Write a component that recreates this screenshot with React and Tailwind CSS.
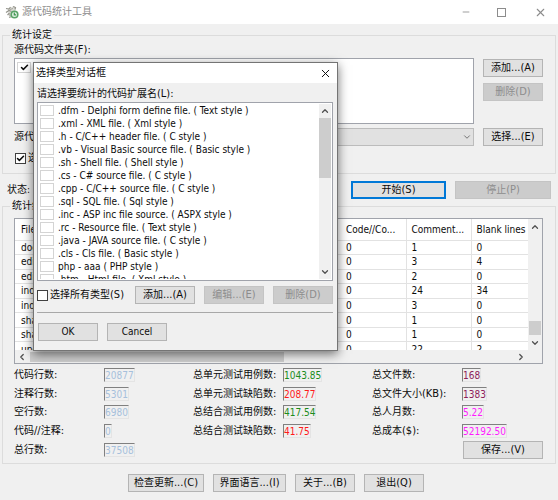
import { Check, ChevronDown, ChevronLeft, ChevronRight, ChevronUp, Minus, X } from 'lucide-react';
import clsx from 'clsx';

const fileTypes = [
  '.dfm - Delphi form define file. ( Text style )',
  '.xml - XML file. ( Xml style )',
  '.h - C/C++ header file. ( C style )',
  '.vb - Visual Basic source file. ( Basic style )',
  '.sh - Shell file. ( Shell style )',
  '.cs - C# source file. ( C style )',
  '.cpp - C/C++ source file. ( C style )',
  '.sql - SQL file. ( Sql style )',
  '.inc - ASP inc file source. ( ASPX style )',
  '.rc - Resource file. ( Text style )',
  '.java - JAVA source file. ( C style )',
  '.cls - Cls file. ( Basic style )',
  'php - aaa ( PHP style )',
  '.htm - Html file. ( Xml style )',
];

const rows = [
  ['doc', '0', '1', '0'],
  ['edit', '0', '3', '4'],
  ['edit', '0', '2', '0'],
  ['ind', '0', '24', '34'],
  ['ind', '0', '3', '0'],
  ['sha', '0', '1', '0'],
  ['sha', '0', '1', '0'],
  ['upd', '0', '22', '2'],
];

const stats = [
  [
    ['代码行数:', '20877', 'text-[#a6c0dc]'],
    ['注释行数:', '5301', 'text-[#a6c0dc]'],
    ['空行数:', '6980', 'text-[#a6c0dc]'],
    ['代码//注释:', '0', 'text-[#a6c0dc]'],
    ['总行数:', '37508', 'text-[#a6c0dc]'],
  ],
  [
    ['总单元测试用例数:', '1043.85', 'text-[#1c8c1c]'],
    ['总单元测试缺陷数:', '208.77', 'text-[#ff1a1a]'],
    ['总结合测试用例数:', '417.54', 'text-[#1c8c1c]'],
    ['总结合测试缺陷数:', '41.75', 'text-[#ff1a1a]'],
  ],
  [
    ['总文件数:', '168', 'text-[#8e1c5a]'],
    ['总文件大小(KB):', '1383', 'text-[#8e1c5a]'],
    ['总人月数:', '5.22', 'text-[#ff1aff]'],
    ['总成本($):', '52192.50', 'text-[#ff1aff]'],
  ],
];

// Latin runs are set one step larger than the Chinese text next to them
function Text({ children }) {
  return children.split(/([\x20-\x7e]+)/).map((part, i) => (
    i % 2 ? <span key={i} className="text-[11px]">{part}</span> : part
  ));
}

function Button({ children, disabled, primary, className = 'w-[60px]' }) {
  return (
    <button
      type="button"
      disabled={disabled}
      className={clsx(
        'flex h-[18px] shrink-0 items-center justify-center whitespace-nowrap',
        disabled && 'border border-[#c4c4c4] bg-[#cccccc] text-[#8c8c8c]',
        primary && 'border-2 border-[#0078d7] bg-[#e1e1e1]',
        !disabled && !primary && 'border border-[#b4b4b4] bg-[#e1e1e1]',
        className,
      )}
    >
      <span>{children}</span>
    </button>
  );
}

function CheckBox({ id, label, checked, className }) {
  return (
    <span className="relative inline-flex shrink-0 align-top">
      <input id={id} type="checkbox" aria-label={label} defaultChecked={checked} className={clsx('peer appearance-none border bg-white', className)} />
      <Check size={9} strokeWidth={4} className="pointer-events-none absolute inset-0 m-auto hidden peer-checked:block" />
    </span>
  );
}

function Group({ title, children }) {
  return (
    <fieldset className="mx-0.5 min-w-0 border border-[#dcdcdc] pr-3 pb-1 pl-[11px]">
      <legend className="-ml-1 h-3.5 px-0.5 leading-[14px]">{title}</legend>
      {children}
    </fieldset>
  );
}

function AppIcon() {
  return (
    <svg viewBox="0 0 14 14" className="size-3.5">
      <path d="M3 3.5L9.5 1l2 9.5L4 13z" fill="#dcdcd6" />
      <path d="M1 3.5l3 .5 1.5-2M8 1.5l2.5 1-.5 2M1 7.5l3-2 2.5 1M2.5 10l2-2" fill="none" stroke="#94948c" strokeWidth="1.2" />
      <path d="M4 12.5l3-1M5 4.5l3-1M3.500 9l2 2" stroke="#a3a39b" />
      <circle cx="9.5" cy="9.5" r="3.3" fill="#dff0e2" stroke="#5aa468" strokeWidth="1.6" />
      <path d="M9.3 7.5v2.3h1.800" fill="none" stroke="#3f9150" strokeWidth="1.2" />
    </svg>
  );
}

function TypeDialog() {
  return (
    <div role="dialog" aria-label="选择类型对话框" className="absolute top-[62px] left-[33px] w-[305px] border border-[#747474] bg-[#f0f0f0] shadow-[0_3px_10px_rgba(0,0,0,0.55)]">
      <div className="flex h-5 items-center justify-between bg-white pr-[5px] pl-0.5">
        <h2>选择类型对话框</h2>
        <button type="button" aria-label="关闭"><X size={13} strokeWidth={1.8} /></button>
      </div>
      <div className="pt-0.5 pr-1 pl-[3px]">
        <p className="h-[17px] leading-[17px]"><Text>请选择要统计的代码扩展名(L):</Text></p>
        <div className="flex h-[179px] overflow-hidden border border-[#a0a3ab] bg-white p-px">
          <ul className="min-w-0 flex-1 overflow-hidden pl-px">
            {fileTypes.map((type, i) => (
              <li key={type} className="flex h-[13px] items-center gap-1 whitespace-nowrap">
                <CheckBox id={`type-${i}`} className="h-[11px] w-3.5 border-[#d4d4d4]" />
                <label htmlFor={`type-${i}`} className="leading-[13px]">{type}</label>
              </li>
            ))}
          </ul>
          <div className="flex w-3 flex-col items-center bg-[#f0f0f0] text-[#505050]">
            <ChevronUp size={10} strokeWidth={3} className="my-[2px]" />
            <div className="h-[60px] w-full bg-[#cdcdcd]" />
            <ChevronDown size={10} strokeWidth={3} className="mt-auto mb-[2px]" />
          </div>
        </div>
        <div className="mt-[5px] flex items-center justify-between">
          <div className="flex w-[89px] items-center gap-0.5">
            <CheckBox id="all-types" className="size-[11px] border-[#404040]" />
            <label htmlFor="all-types" className="whitespace-nowrap"><Text>选择所有类型(S)</Text></label>
          </div>
          <Button><Text>添加...(A)</Text></Button>
          <Button disabled><Text>编辑...(E)</Text></Button>
          <Button disabled><Text>删除(D)</Text></Button>
        </div>
        <hr className="mt-2 border-[#a8a8a8]" />
        <div className="mt-2.5 mb-[9px] ml-px flex gap-[9px]">
          <Button>OK</Button>
          <Button>Cancel</Button>
        </div>
      </div>
    </div>
  );
}

function ResultTable() {
  return (
    <div className="mt-[5px] border border-[#a0a3ab] bg-[#f0f0f0]">
      <div className="flex h-[131px] overflow-hidden">
        <div className="min-w-0 flex-1 overflow-hidden bg-white">
          <table className="h-[138px] w-full table-fixed border-collapse text-left leading-[13px]">
            <thead>
              <tr className="h-[21px] border-b border-[#e2e2e2]">
                <th className="pl-1.5 font-normal">File</th>
                <th className="w-[65px] border-r border-[#e2e2e2] pl-[5px] font-normal whitespace-nowrap">Code//Co...</th>
                <th className="w-[65px] border-r border-[#e2e2e2] pl-[5px] font-normal whitespace-nowrap">Comment...</th>
                <th className="w-[57px] pl-[5px] font-normal whitespace-nowrap">Blank lines</th>
              </tr>
            </thead>
            <tbody>
              {rows.map(([file, code, comment, blank], i) => (
                <tr key={i} className="border-b border-[#e2e2e2]">
                  <td className="pl-1.5">{file}</td>
                  <td className="border-r border-[#e2e2e2] pl-[5px]">{code}</td>
                  <td className="border-r border-[#e2e2e2] pl-[5px]">{comment}</td>
                  <td className="pl-[5px]">{blank}</td>
                </tr>
              ))}
            </tbody>
          </table>
        </div>
        <div className="flex w-3.5 flex-col items-center text-[#505050]">
          <ChevronUp size={10} strokeWidth={3} className="mt-[3px]" />
          <div className="mt-auto mb-px h-3.5 w-3 bg-[#cdcdcd]" />
          <ChevronDown size={10} strokeWidth={3} className="my-[2px]" />
        </div>
      </div>
      <div className="flex h-[13px] items-center pr-4 pl-0.5 text-[#505050]">
        <ChevronLeft size={10} strokeWidth={3} />
        <div className="ml-[3px] h-2.5 w-[254px] bg-[#cdcdcd]" />
        <ChevronRight size={10} strokeWidth={3} className="ml-auto" />
      </div>
    </div>
  );
}

export default function App() {
  return (
    <main className="relative min-h-[500px] overflow-hidden bg-[#f0f0f0] font-['DejaVu_Sans_Condensed','Noto_Sans_CJK_SC',sans-serif] text-[10px] leading-[14px] text-[#0c0c0c]">
      <header className="flex h-6 items-center bg-white pr-[11px] pl-[5px] text-[#8c8c8c]">
        <AppIcon />
        <h1 className="ml-[3px] flex-1">源代码统计工具</h1>
        <div className="flex items-center gap-[26px]">
          <button type="button" aria-label="最小化"><Minus size={10} /></button>
          <button type="button" aria-label="最大化" className="mr-0.5 size-[9px] border border-[#8c8c8c]" />
          <button type="button" aria-label="关闭"><X size={13} /></button>
        </div>
      </header>

      <div className="pt-1">
        <Group title="统计设定">
          <p className="h-4 leading-4"><Text>源代码文件夹(F):</Text></p>
          <div className="flex gap-[9px]">
            <div className="h-[66px] flex-1 border border-[#a0a3ab] bg-white px-0.5 py-[3px]">
              <CheckBox id="folder" label="文件夹" checked className="h-[11px] w-3.5 border-[#d4d4d4]" />
            </div>
            <div className="flex flex-col gap-1.5 pt-px">
              <Button><Text>添加...(A)</Text></Button>
              <Button disabled><Text>删除(D)</Text></Button>
            </div>
          </div>
          <div className="mt-1 flex items-center gap-[9px]">
            <label htmlFor="types" className="w-[70px] shrink-0">源代码</label>
            <div className="relative flex flex-1">
              <select id="types" className="h-[18px] w-full appearance-none border border-[#bcbcbc] bg-[#e1e1e1]" />
              <ChevronDown size={10} className="pointer-events-none absolute top-1 right-0.5 text-[#606060]" />
            </div>
            <Button><Text>选择...(E)</Text></Button>
          </div>
          <div className="mt-[5px] mb-1 flex items-center gap-0.5 pl-px">
            <CheckBox id="subfolders" checked className="size-[11px] border-[#404040]" />
            <label htmlFor="subfolders">选择</label>
          </div>
        </Group>

        <div className="mt-[7px] flex items-center gap-[9px] pr-[7px] pl-[7px]">
          <p className="flex-1">状态:</p>
          <Button primary className="w-[95px]"><Text>开始(S)</Text></Button>
          <Button disabled className="w-[96px]"><Text>停止(P)</Text></Button>
        </div>

        <Group title="统计结果">
          <ResultTable />
          <div className="mt-[2px] grid grid-cols-[179px_179px_1fr]">
            {stats.map((column, i) => (
              <dl key={i} className="grid h-[93px] grid-rows-5">
                {column.map(([label, value, color]) => (
                  <div key={label} className="flex items-center">
                    <dt className="w-[90px] shrink-0 whitespace-nowrap"><Text>{label}</Text></dt>
                    <dd className={clsx('h-3.5 border-t border-r border-b border-l border-t-[#808080] border-r-[#e4e4e4] border-b-[#e4e4e4] border-l-[#808080] leading-[13px]', color)}>
                      {value}
                    </dd>
                  </div>
                ))}
                {i === 2 && (
                  <div className="flex items-center justify-end">
                    <Button className="w-[80px]"><Text>保存...(V)</Text></Button>
                  </div>
                )}
              </dl>
            ))}
          </div>
        </Group>

        <footer className="mt-2.5 flex justify-center gap-[9px] pr-1.5">
          <Button className="w-[76px]"><Text>检查更新...(C)</Text></Button>
          <Button className="w-[73px]"><Text>界面语言...(I)</Text></Button>
          <Button><Text>关于...(B)</Text></Button>
          <Button><Text>退出(Q)</Text></Button>
        </footer>
      </div>

      <TypeDialog />
    </main>
  );
}
